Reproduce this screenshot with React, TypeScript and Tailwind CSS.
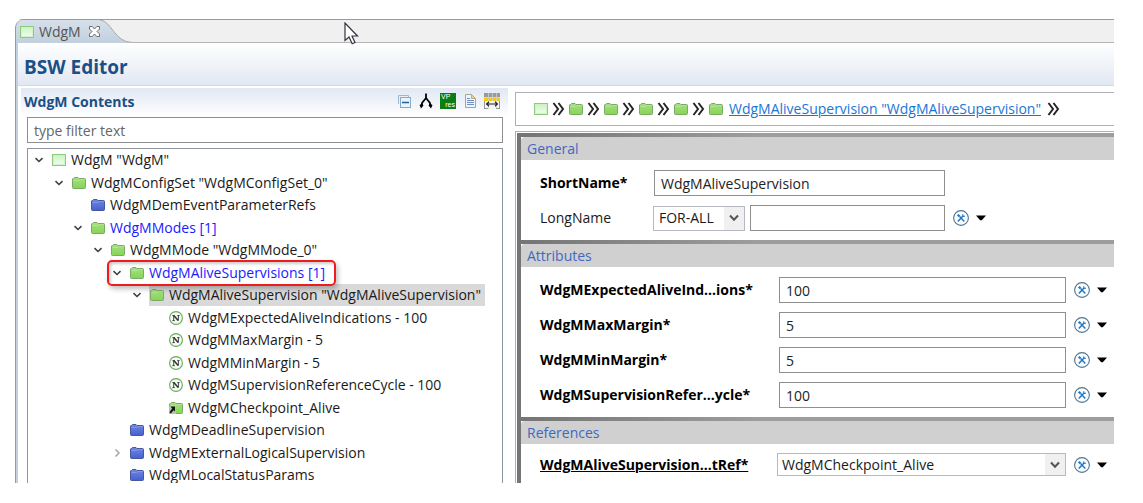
import React from "react";
import clsx from "clsx";

type IconKind = "root" | "green" | "blue" | "number" | "link";

interface TreeNode {
  label: string;
  depth: number;
  icon: IconKind;
  state?: "open" | "closed";
  blue?: boolean;
  selected?: boolean;
  marked?: boolean;
}

const nodes: TreeNode[] = [
  { label: 'WdgM "WdgM"', depth: 0, icon: "root", state: "open" },
  { label: 'WdgMConfigSet "WdgMConfigSet_0"', depth: 1, icon: "green", state: "open" },
  { label: "WdgMDemEventParameterRefs", depth: 2, icon: "blue" },
  { label: "WdgMModes [1]", depth: 2, icon: "green", state: "open", blue: true },
  { label: 'WdgMMode "WdgMMode_0"', depth: 3, icon: "green", state: "open" },
  { label: "WdgMAliveSupervisions [1]", depth: 4, icon: "green", state: "open", blue: true, marked: true },
  { label: 'WdgMAliveSupervision "WdgMAliveSupervision"', depth: 5, icon: "green", state: "open", selected: true },
  { label: "WdgMExpectedAliveIndications - 100", depth: 6, icon: "number" },
  { label: "WdgMMaxMargin - 5", depth: 6, icon: "number" },
  { label: "WdgMMinMargin - 5", depth: 6, icon: "number" },
  { label: "WdgMSupervisionReferenceCycle - 100", depth: 6, icon: "number" },
  { label: "WdgMCheckpoint_Alive", depth: 6, icon: "link" },
  { label: "WdgMDeadlineSupervision", depth: 4, icon: "blue" },
  { label: "WdgMExternalLogicalSupervision", depth: 4, icon: "blue", state: "closed" },
  { label: "WdgMLocalStatusParams", depth: 4, icon: "blue" },
];

const indents = ["pl-[3px]", "pl-[23px]", "pl-[42px]", "pl-[62px]", "pl-[81px]", "pl-[101px]", "pl-[120px]"];

const attributes = [
  { id: "expected", label: "WdgMExpectedAliveInd...ions*", value: "100" },
  { id: "max", label: "WdgMMaxMargin*", value: "5" },
  { id: "min", label: "WdgMMinMargin*", value: "5" },
  { id: "cycle", label: "WdgMSupervisionRefer...ycle*", value: "100" },
];

const RootIcon = () => (
  <svg width="14" height="14" viewBox="0 0 14 14" className="shrink-0">
    <defs>
      <linearGradient id="rootFill" x1="0" y1="0" x2="0" y2="1">
        <stop offset="0" stopColor="#c9f2bf" />
        <stop offset="1" stopColor="#f4fdf2" />
      </linearGradient>
    </defs>
    <rect x="0.5" y="1.5" width="13" height="11" fill="url(#rootFill)" stroke="#8ccb7e" />
    <path d="M1.5 3V11.5H12.5V3" fill="none" stroke="#d2f2ca" />
  </svg>
);

const FolderIcon = ({ color, link }: { color: "green" | "blue"; link?: boolean }) => {
  const green = color === "green";
  return (
    <svg width="14" height="14" viewBox="0 0 14 14" className="shrink-0">
      <defs>
        <linearGradient id="greenFill" x1="0" y1="0" x2="0" y2="1">
          <stop offset="0" stopColor="#a6df83" />
          <stop offset="1" stopColor="#86d455" />
        </linearGradient>
        <linearGradient id="blueFill" x1="0" y1="0" x2="0" y2="1">
          <stop offset="0" stopColor="#7188e0" />
          <stop offset="1" stopColor="#4560cf" />
        </linearGradient>
      </defs>
      <path
        d="M0.5 3Q0.5 2.5 1.5 2.5L2.5 1.5H6L7 2.5H12.5Q13.5 2.5 13.5 3.5V11.5Q13.5 12.5 12.5 12.5H1.5Q0.5 12.5 0.5 11.5Z"
        fill={green ? "url(#greenFill)" : "url(#blueFill)"}
        stroke={green ? "#79ab66" : "#46569f"}
      />
      <path d="M1.5 4.5H6.5L8 3.5H12.5" fill="none" stroke={green ? "#b9e6a0" : "#8c9de8"} strokeWidth="0.8" />
      {link && (
        <>
          <path d="M0 5H7V13H0Z" fill="#a9cf9b" />
          <path d="M1.5 5.5H6V10.5L4.6 9.2L1.8 12.6L0.4 11.2L3.2 7.4Z" fill="#151515" />
        </>
      )}
    </svg>
  );
};

const NumberIcon = () => (
  <svg width="14" height="14" viewBox="0 0 14 14" className="shrink-0">
    <circle cx="7" cy="7" r="6.4" fill="#f4fbf1" stroke="#67aa5b" strokeWidth="1.1" />
    <path d="M3.4 4.6H5.6M8.2 4.6H10.6M3.4 9.6H5.8M4.7 4.6V9.6M9.4 4.6V9.6" stroke="#333" strokeWidth="0.9" />
    <path d="M4.8 4.6L9.2 9.6" stroke="#333" strokeWidth="1.5" />
  </svg>
);

const NodeIcon = ({ kind }: { kind: IconKind }) => {
  if (kind === "root") return <RootIcon />;
  if (kind === "number") return <NumberIcon />;
  return <FolderIcon color={kind === "blue" ? "blue" : "green"} link={kind === "link"} />;
};

const Chevrons = () => (
  <svg width="13" height="14" viewBox="0 0 13 14" className="shrink-0">
    <path d="M1.5 1L6 7L1.5 13M6.5 1L11 7L6.5 13" fill="none" stroke="#262626" strokeWidth="2" />
  </svg>
);

const ToolButtons = ({ name }: { name: string }) => (
  <div className="flex shrink-0 items-center gap-[7px]">
    <button type="button" aria-label={`Edit ${name}`}>
      <svg width="16" height="16" viewBox="0 0 16 16">
        <circle cx="8" cy="8" r="7.4" fill="#fbfdff" stroke="#4f7590" strokeWidth="1.1" />
        <path d="M4.8 11.4L10 6" stroke="#1f78c8" strokeWidth="1.5" />
        <path d="M9.6 4.4L10 6.1L11.8 6.4" fill="none" stroke="#1f78c8" strokeWidth="1.2" />
        <path d="M4.7 4.7L6.6 6.5" stroke="#1f78c8" strokeWidth="2.2" />
        <path d="M6.6 6.6L11.3 11.5" stroke="#1f78c8" strokeWidth="1.4" />
      </svg>
    </button>
    <button type="button" aria-label={`Menu ${name}`}>
      <svg width="10" height="6" viewBox="0 0 10 6">
        <path d="M0 0.5H10L5.8 5.3H4.2Z" fill="#000" />
      </svg>
    </button>
  </div>
);

const SelectArrow = () => (
  <span className="pointer-events-none absolute inset-y-px right-px flex w-5 items-center justify-center bg-[#f0f0f0]">
    <svg width="10" height="8" viewBox="0 0 10 8">
      <path d="M1 1.5L5 5.8L9 1.5" fill="none" stroke="#555" strokeWidth="2" />
    </svg>
  </span>
);

const Section = ({ title, children }: { title: string; children: React.ReactNode }) => (
  <section>
    <div className="h-1 bg-linear-to-r from-[#757575] to-[#9d9d9d] to-40%" />
    <h3 className="h-[23px] rounded-tl-sm bg-[#d0d0d0] pl-1.5 leading-[23px] text-[#3f68c0]">{title}</h3>
    {children}
  </section>
);

const field = "h-[26px] border border-[#8f8f8f] bg-white px-1.5 text-[#222] outline-none";

const Toolbar = () => (
  <div className="flex gap-1.5">
    <button type="button" aria-label="Collapse all">
      <svg width="16" height="16" viewBox="0 0 16 16">
        <path d="M2.5 11V2.5H12.5V4" fill="none" stroke="#9db8d2" />
        <rect x="4.5" y="4.5" width="10" height="10" fill="#e8f3fc" stroke="#8aa8c6" />
        <path d="M6 9.5H13" stroke="#1f5f9c" strokeWidth="1.4" />
      </svg>
    </button>
    <button type="button" aria-label="Show hierarchy">
      <svg width="16" height="16" viewBox="0 0 16 16">
        <path d="M8 0.5V6M8 5L4 10V13M8 5L12 10V13" fill="none" stroke="#000" strokeWidth="1.8" />
        <path d="M1.5 12L4 10.5L5.5 12.5L3 15.5ZM14.5 12L12 10.5L10.5 12.5L13 15.5Z" fill="#000" />
      </svg>
    </button>
    <button
      type="button"
      aria-label="Variation point resolver"
      className="flex h-4 w-4 flex-col bg-[#0b7d12] font-['Liberation_Sans',sans-serif] text-[7px] leading-[8px] text-white"
    >
      <span className="pl-px text-left">VP</span>
      <span className="pr-px text-right">res</span>
    </button>
    <button type="button" aria-label="Show description">
      <svg width="16" height="16" viewBox="0 0 16 16">
        <path d="M3.5 1.5H9.5L13.5 5.5V14.5H3.5Z" fill="#eef4fd" stroke="#a9a58c" />
        <path d="M9.5 1.5V5.5H13.5Z" fill="#e9cf8d" stroke="#c4ab6b" />
        <path d="M5 5.5H8M5 7.5H12M5 9.5H12M5 11.5H12" stroke="#6f8fc4" />
      </svg>
    </button>
    <button type="button" aria-label="Fit columns">
      <svg width="16" height="16" viewBox="0 0 16 16">
        <path d="M0 0H16V16H0Z" fill="#f4f4f4" />
        <path d="M0 0H16V4H0Z" fill="#9a9a9a" />
        <path d="M0 4.5H16V8H0Z" fill="#f6c911" />
        <path d="M4.5 0V16M8.5 0V8M12.5 0V16M0 4.5H16" stroke="#d0d0d0" strokeWidth="0.8" />
        <path d="M0.5 8V15.5M15.5 8V15.5M0 15.5H4M12 15.5H16" stroke="#999" />
        <path d="M2.5 11H13.5M5 8.8L2.6 11L5 13.2M11 8.8L13.4 11L11 13.2" fill="none" stroke="#222" strokeWidth="1.2" />
      </svg>
    </button>
  </div>
);

const TreeRow = ({ node }: { node: TreeNode }) => (
  <li role="treeitem" className={clsx("flex h-[22px] even:h-[23px]", indents[node.depth])}>
    <div className="relative flex items-center">
      <span className="flex w-5 shrink-0">
        {node.state && (
          <button type="button" aria-label={`Toggle ${node.label}`} className="flex h-4 w-4 items-center justify-center">
            <svg width="10" height="10" viewBox="0 0 10 10">
              {node.state === "open" ? (
                <path d="M1.5 3.2L5 6.5L8.5 3.2" fill="none" stroke="#404040" strokeWidth="1.6" />
              ) : (
                <path d="M3.5 1.5L7 5L3.5 8.5" fill="none" stroke="#a6a6a6" strokeWidth="1.5" />
              )}
            </svg>
          </button>
        )}
      </span>
      <span className={clsx("flex h-full items-center gap-[5px] whitespace-nowrap px-px", node.selected && "bg-[#d9d9d9] pr-1", node.blue && "text-[#1a1aff]")}>
        <NodeIcon kind={node.icon} />
        {node.label}
      </span>
      {node.marked && (
        <span className="pointer-events-none absolute -top-px -right-2.5 -bottom-0.5 -left-0.5 z-10 rounded-[5px] border-2 border-[#ee1c1c] shadow-[2px_3px_5px_rgba(0,0,0,0.25),inset_2px_2px_3px_rgba(0,0,0,0.2)]" />
      )}
    </div>
  </li>
);

export default function App() {
  return (
    <div className="relative flex h-screen flex-col bg-white pt-[19px] pr-[29px] pb-5 pl-[15px] font-['Open_Sans','Noto_Sans',sans-serif] text-[14px] leading-5 text-[#1a1a1a]">
      <div className="flex min-h-0 flex-1 flex-col overflow-hidden rounded-tl-lg">
        <div className="flex h-6 shrink-0 border-t border-[#9a9a9a] bg-[#f0f0f0]">
          <div role="tab" className="flex items-center rounded-tl-lg border-l border-[#9a9a9a] bg-linear-to-b from-[#d5e0ea] to-[#c2cfdd] pl-1 text-[#555]">
            <RootIcon />
            <span className="pl-[5px]">WdgM</span>
            <button type="button" aria-label="Close WdgM" className="pl-2">
              <svg width="11" height="11" viewBox="0 0 11 11">
                <path d="M0.5 0.5H3.2L5.5 3L7.8 0.5H10.5V3L8 5.5L10.5 8V10.5H7.8L5.5 8L3.2 10.5H0.5V8L3 5.5L0.5 3Z" fill="#fff" stroke="#606060" strokeWidth="0.9" />
              </svg>
            </button>
          </div>
          <svg width="32" height="23" viewBox="0 0 32 23" className="shrink-0">
            <defs>
              <linearGradient id="tabFill" x1="0" y1="0" x2="0" y2="1">
                <stop offset="0" stopColor="#d5e0ea" />
                <stop offset="1" stopColor="#c2cfdd" />
              </linearGradient>
            </defs>
            <path d="M0 0C12 1 14 22 32 22.5V23H0Z" fill="url(#tabFill)" />
            <path d="M0 0C12 1 14 22 32 22.5" fill="none" stroke="#a8a8a8" />
          </svg>
          <div className="flex-1 border-b border-[#b4b4b4]" />
        </div>

        <div className="flex min-h-0 flex-1 flex-col border-l border-[#9a9a9a]">
          <div className="flex min-h-0 flex-1 flex-col border-l-2 border-[#c3d0dd]">
            <h1 className="h-[43px] shrink-0 border-b border-[#ccd9e6] bg-linear-to-b from-white to-[#e1e8f2] pl-1.5 text-[19px] leading-[48px] font-bold text-[#1b4f86]">
              BSW Editor
            </h1>

            <main className="grid min-h-0 flex-1 grid-cols-[497px_1fr]">
              <section className="flex min-h-0 flex-col pt-0.5 pr-[7px] pl-[3px]">
                <header className="flex h-[29px] shrink-0 items-start justify-between bg-linear-to-b from-[#e1e8f4] to-white pt-[5px] pr-2 pl-[3px]">
                  <h2 className="leading-[18px] font-bold text-[#1b4f86]">WdgM Contents</h2>
                  <Toolbar />
                </header>
                <div className="flex min-h-0 flex-1 flex-col gap-[5px] pr-[5px] pl-1.5">
                  <input
                    type="text"
                    aria-label="Filter"
                    placeholder="type filter text"
                    className={clsx(field, "w-full shrink-0 placeholder:text-[#666]")}
                  />
                  <ul role="tree" className="min-h-0 flex-1 overflow-hidden border border-b-0 border-[#8f959e]">
                    {nodes.map((node) => (
                      <TreeRow key={node.label} node={node} />
                    ))}
                  </ul>
                </div>
              </section>

              <section className="flex min-h-0 min-w-0 flex-col gap-[5px] pt-1.5">
                <nav className="flex h-[34px] shrink-0 items-center gap-1 border border-r-0 border-[#b0b0b4] pl-[18px]">
                  <RootIcon />
                  <Chevrons />
                  {[1, 2, 3, 4].map((i) => (
                    <React.Fragment key={i}>
                      <FolderIcon color="green" />
                      <Chevrons />
                    </React.Fragment>
                  ))}
                  <FolderIcon color="green" />
                  <a href="#alive" className="px-0.5 whitespace-nowrap text-[#1976d8] underline">
                    WdgMAliveSupervision "WdgMAliveSupervision"
                  </a>
                  <Chevrons />
                </nav>

                <form className="min-h-0 flex-1 overflow-hidden border-t border-l border-[#b0b0b0] pt-px pl-px">
                  <div className="h-full border-l-4 border-[#757575]">
                    <Section title="General">
                      <div className="flex flex-col gap-[9px] pt-[10px] pb-[9px] pl-[19px]">
                        <div className="flex items-center">
                          <label htmlFor="shortName" className="w-[114px] font-bold text-black">ShortName*</label>
                          <input id="shortName" type="text" defaultValue="WdgMAliveSupervision" className={clsx(field, "w-[291px]")} />
                        </div>
                        <div className="flex items-center">
                          <label htmlFor="longName" className="w-[113px]">LongName</label>
                          <span className="relative">
                            <select aria-label="Language" className="block h-[25px] w-[92px] appearance-none border border-[#b8b8c0] bg-white px-[5px]">
                              <option>FOR-ALL</option>
                            </select>
                            <SelectArrow />
                          </span>
                          <input id="longName" type="text" className={clsx(field, "mr-2 ml-[5px] w-[195px]")} />
                          <ToolButtons name="LongName" />
                        </div>
                      </div>
                    </Section>

                    <Section title="Attributes">
                      <div className="flex flex-col gap-[9px] pt-[10px] pr-[7px] pb-[9px] pl-[19px]">
                        {attributes.map((a) => (
                          <div key={a.id} className="flex items-center">
                            <label htmlFor={a.id} className="w-[239px] shrink-0 font-bold text-black">{a.label}</label>
                            <input id={a.id} type="text" defaultValue={a.value} className={clsx(field, "mr-2 min-w-0 flex-1")} />
                            <ToolButtons name={a.label} />
                          </div>
                        ))}
                      </div>
                    </Section>

                    <Section title="References">
                      <div className="flex items-center py-[9px] pr-[7px] pl-[19px]">
                        <label htmlFor="ref" className="w-[237px] shrink-0 font-bold text-black underline">WdgMAliveSupervision...tRef*</label>
                        <span className="relative mr-2 min-w-0 flex-1">
                          <select id="ref" className="block h-[23px] w-full appearance-none border border-[#b0bcc8] bg-white px-1">
                            <option>WdgMCheckpoint_Alive</option>
                          </select>
                          <SelectArrow />
                        </span>
                        <ToolButtons name="Reference" />
                      </div>
                    </Section>
                  </div>
                </form>
              </section>
            </main>
          </div>
        </div>
      </div>

      {/* mouse pointer */}
      <svg width="15" height="23" viewBox="0 0 15 23" className="absolute top-[22px] left-[344px]">
        <path d="M1 1V18.5L5 15L8.2 21.8L11 20.5L8 14H13.5Z" fill="#fff" stroke="#33333f" strokeWidth="1.2" />
      </svg>
    </div>
  );
}
